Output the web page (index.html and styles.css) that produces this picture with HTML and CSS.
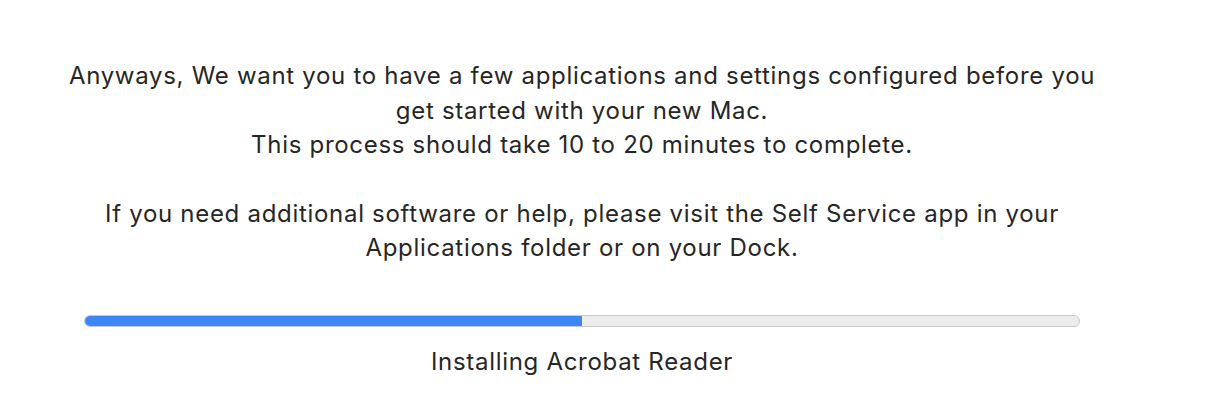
FILE: index.html
```html
<!DOCTYPE html>
<html>
<head>
<meta charset="utf-8">
<link rel="stylesheet" href="styles.css">
</head>
<body>
<main class="wrap">
  <div class="message">
    <p>Anyways, We want you to have a few applications and settings configured before you<br>get started with your new Mac.<br>This process should take 10 to 20 minutes to complete.</p>
    <p>If you need additional software or help, please visit the Self Service app in your<br>Applications folder or on your Dock.</p>
  </div>
  <div class="progress"><div class="fill" style="width: 50%"></div></div>
  <div class="status">Installing Acrobat Reader</div>
</main>
</body>
</html>
```

FILE: styles.css
```css
html, body {
  margin: 0;
  padding: 0;
  background: #ffffff;
}
body {
  font-family: Inter, "Noto Sans", "Liberation Sans", sans-serif;
  color: #262626;
}
.wrap {
  width: 1164px;
  padding-top: 59px;
  display: flex;
  flex-direction: column;
  align-items: center;
}
.message {
  text-align: center;
  font-size: 24px;
  line-height: 34.5px;
  letter-spacing: 0.7px;
  white-space: nowrap;
}
.message p {
  margin: 0 0 34px 0;
}
.progress {
  align-self: stretch;
  margin: 15px 84px 0 84px;
  height: 10px;
  border: 1px solid #c9c9c9;
  border-radius: 6px;
  background: #ececec;
  overflow: hidden;
}
.fill {
  height: 100%;
  background: #3b87f7;
  margin: -1px 0 0 -1px;
  padding: 1px 0 1px 1px;
}
.status {
  margin-top: 18px;
  font-size: 24px;
  line-height: 34px;
  letter-spacing: 0.7px;
}
```
